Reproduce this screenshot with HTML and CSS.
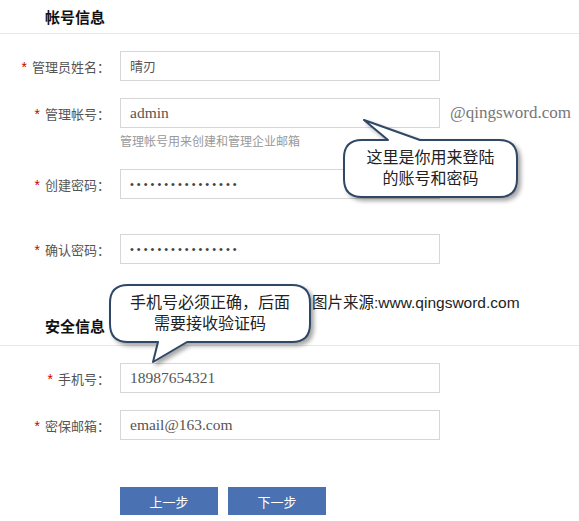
FILE: index.html
```html
<!DOCTYPE html>
<html lang="zh-CN">
<head>
<meta charset="utf-8">
<title>注册</title>
<link rel="stylesheet" href="styles.css">
</head>
<body>
<div class="page">
  <div class="section-title">帐号信息</div>

  <div class="row r-first">
    <label class="label"><span class="req">*</span>管理员姓名：</label>
    <div class="field cjk">晴刃</div>
  </div>

  <div class="row r-std">
    <label class="label"><span class="req">*</span>管理帐号：</label>
    <div class="field serif">admin</div>
    <span class="domain">@qingsword.com</span>
  </div>
  <div class="hint">管理帐号用来创建和管理企业邮箱</div>

  <div class="row r-pwd1">
    <label class="label"><span class="req">*</span>创建密码：</label>
    <div class="field dots">••••••••••••••••</div>
  </div>

  <div class="row r-pwd2">
    <label class="label"><span class="req">*</span>确认密码：</label>
    <div class="field dots">••••••••••••••••</div>
  </div>

  <div class="source">图片来源:www.qingsword.com</div>

  <div class="section-title second">安全信息</div>

  <div class="row r-first">
    <label class="label"><span class="req">*</span>手机号：</label>
    <div class="field serif">18987654321</div>
  </div>

  <div class="row r-std">
    <label class="label"><span class="req">*</span>密保邮箱：</label>
    <div class="field serif">email@163.com</div>
  </div>

  <div class="buttons">
    <button class="btn">上一步</button>
    <button class="btn">下一步</button>
  </div>

  <div class="callout callout-account">
    <svg class="bubble" width="190" height="92" viewBox="0 0 190 92">
      <path d="M22 25 L48 25 L24 5 L80 25 L159 25 Q177 25 177 43 L177 64 Q177 82 159 82 L22 82 Q4 82 4 64 L4 43 Q4 25 22 25 Z" fill="#ffffff" stroke="#2f4866" stroke-width="2" stroke-linejoin="round"/>
    </svg>
    <div class="callout-text t-account">这里是你用来登陆<br>的账号和密码</div>
  </div>

  <div class="callout callout-phone">
    <svg class="bubble" width="215" height="90" viewBox="0 0 215 90">
      <path d="M23 5 L187 5 Q205 5 205 23 L205 44 Q205 62 187 62 L82 62 L48 82 L53 62 L23 62 Q5 62 5 44 L5 23 Q5 5 23 5 Z" fill="#ffffff" stroke="#2f4866" stroke-width="2" stroke-linejoin="round"/>
    </svg>
    <div class="callout-text t-phone">手机号必须正确，后面<br>需要接收验证码</div>
  </div>
</div>
</body>
</html>
```

FILE: styles.css
```css
html, body {
  margin: 0;
  padding: 0;
  background: #ffffff;
}

.page {
  position: relative;
  width: 579px;
  height: 521px;
  overflow: hidden;
  font-family: "Noto Sans CJK SC", "Liberation Sans", sans-serif;
  color: #555555;
}

.section-title {
  height: 33px;
  line-height: 33px;
  padding-left: 45px;
  font-size: 15px;
  font-weight: bold;
  color: #111111;
  border-bottom: 1px solid #e8e8e8;
}

.section-title.second {
  height: 26px;
  line-height: 26px;
  padding-bottom: 6px;
}

.row {
  display: flex;
  align-items: center;
}

.r-first { margin-top: 17px; }
.r-std { margin-top: 17px; }
.r-pwd1 { margin-top: 21px; }
.r-pwd2 { margin-top: 35px; }

.label {
  width: 110px;
  text-align: right;
  font-size: 13px;
  color: #555555;
  white-space: nowrap;
}

.req {
  color: #cc0000;
  font-family: "Liberation Sans", sans-serif;
  font-size: 14px;
  margin-right: 5px;
}

.field {
  box-sizing: border-box;
  width: 320px;
  height: 30px;
  margin-left: 10px;
  padding-left: 9px;
  border: 1px solid #d6d6d6;
  line-height: 28px;
  color: #555555;
  background: #ffffff;
}

.field.cjk {
  font-size: 13px;
}

.field.serif {
  font-family: "Liberation Serif", "Noto Sans CJK SC", serif;
  font-size: 15.5px;
}

.field.dots {
  font-family: "Liberation Sans", sans-serif;
  font-size: 11px;
  letter-spacing: 3px;
  color: #444444;
}

.domain {
  margin-left: 10px;
  font-family: "Liberation Serif", serif;
  font-size: 17px;
  color: #777777;
}

.hint {
  margin-top: 6px;
  padding-left: 120px;
  font-size: 12px;
  line-height: 14px;
  color: #999999;
}

.source {
  margin-top: 29px;
  margin-left: 312px;
  font-family: "Liberation Sans", "Noto Sans CJK SC", sans-serif;
  font-size: 15.5px;
  line-height: 20px;
  color: #222222;
}

.buttons {
  display: flex;
  gap: 10px;
  margin-top: 47px;
  padding-left: 120px;
}

.btn {
  width: 98px;
  height: 28px;
  border: none;
  padding: 0;
  background: #4a72b2;
  color: #ffffff;
  font-family: "Noto Sans CJK SC", sans-serif;
  font-size: 13px;
}

.callout {
  position: absolute;
}

.bubble {
  display: block;
  filter: drop-shadow(3px 3px 2px rgba(0, 0, 0, 0.35));
}

.callout-account {
  left: 340px;
  top: 115px;
}

.callout-phone {
  left: 105px;
  top: 280px;
}

.callout-text {
  position: absolute;
  text-align: center;
  font-size: 16px;
  line-height: 21px;
  color: #222222;
  white-space: nowrap;
}

.t-account {
  left: 4px;
  width: 173px;
  top: 31px;
}

.t-phone {
  left: 5px;
  width: 200px;
  top: 11px;
}
```
